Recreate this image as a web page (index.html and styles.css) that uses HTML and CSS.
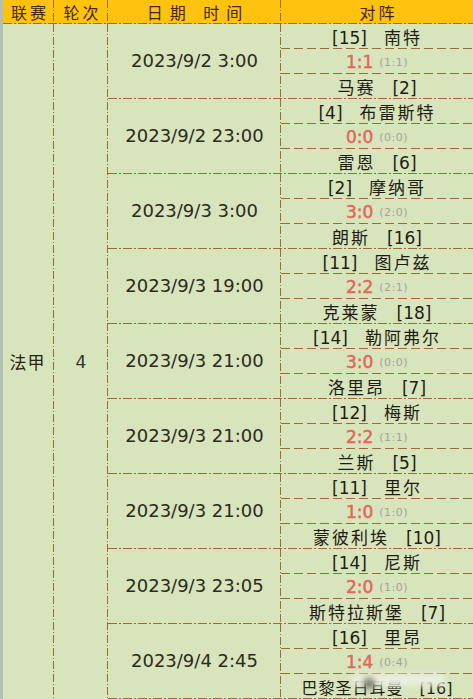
FILE: index.html
```html
<!DOCTYPE html>
<html lang="zh">
<head>
<meta charset="utf-8">
<link rel="stylesheet" href="styles.css">
</head>
<body>
<div class="sheet">
  <div class="head">
    <div class="h vl">联赛</div>
    <div class="h vl">轮次</div>
    <div class="h vl wide">日期 时间</div>
    <div class="h">对阵</div>
  </div>
  <div class="body">
    <div class="merged vl cjk">法甲</div>
    <div class="merged vl num">4</div>
    <div class="matches">
      <div class="match">
        <div class="time vl">2023/9/2 3:00</div>
        <div class="vs">
          <div class="row sub">[15]　<span class="n">南特</span></div>
          <div class="row sub score"><b>1:1</b><span>(1:1)</span></div>
          <div class="row"><span class="n">马赛</span>　[2]</div>
        </div>
      </div>
      <div class="match">
        <div class="time vl">2023/9/2 23:00</div>
        <div class="vs">
          <div class="row sub">[4]　<span class="n">布雷斯特</span></div>
          <div class="row sub score"><b>0:0</b><span>(0:0)</span></div>
          <div class="row"><span class="n">雷恩</span>　[6]</div>
        </div>
      </div>
      <div class="match">
        <div class="time vl">2023/9/3 3:00</div>
        <div class="vs">
          <div class="row sub">[2]　<span class="n">摩纳哥</span></div>
          <div class="row sub score"><b>3:0</b><span>(2:0)</span></div>
          <div class="row"><span class="n">朗斯</span>　[16]</div>
        </div>
      </div>
      <div class="match">
        <div class="time vl">2023/9/3 19:00</div>
        <div class="vs">
          <div class="row sub">[11]　<span class="n">图卢兹</span></div>
          <div class="row sub score"><b>2:2</b><span>(2:1)</span></div>
          <div class="row"><span class="n">克莱蒙</span>　[18]</div>
        </div>
      </div>
      <div class="match">
        <div class="time vl">2023/9/3 21:00</div>
        <div class="vs">
          <div class="row sub">[14]　<span class="n">勒阿弗尔</span></div>
          <div class="row sub score"><b>3:0</b><span>(0:0)</span></div>
          <div class="row"><span class="n">洛里昂</span>　[7]</div>
        </div>
      </div>
      <div class="match">
        <div class="time vl">2023/9/3 21:00</div>
        <div class="vs">
          <div class="row sub">[12]　<span class="n">梅斯</span></div>
          <div class="row sub score"><b>2:2</b><span>(1:1)</span></div>
          <div class="row"><span class="n">兰斯</span>　[5]</div>
        </div>
      </div>
      <div class="match">
        <div class="time vl">2023/9/3 21:00</div>
        <div class="vs">
          <div class="row sub">[11]　<span class="n">里尔</span></div>
          <div class="row sub score"><b>1:0</b><span>(1:0)</span></div>
          <div class="row"><span class="n">蒙彼利埃</span>　[10]</div>
        </div>
      </div>
      <div class="match">
        <div class="time vl">2023/9/3 23:05</div>
        <div class="vs">
          <div class="row sub">[14]　<span class="n">尼斯</span></div>
          <div class="row sub score"><b>2:0</b><span>(1:0)</span></div>
          <div class="row"><span class="n">斯特拉斯堡</span>　[7]</div>
        </div>
      </div>
      <div class="match">
        <div class="time vl">2023/9/4 2:45</div>
        <div class="vs">
          <div class="row sub">[16]　<span class="n">里昂</span></div>
          <div class="row sub score"><b>1:4</b><span>(0:4)</span></div>
          <div class="row last"><span class="n">巴黎圣日耳曼</span>　[16]<i class="smudge"></i></div>
        </div>
      </div>
    </div>
  </div>
</div>
</body>
</html>
```

FILE: styles.css
```css
html, body {
  margin: 0;
  padding: 0;
  background: #d8e4bc;
}

.sheet {
  width: 470px;
  height: 699px;
  overflow: hidden;
  border-left: 3px solid #b2c1b6;
  display: flex;
  flex-direction: column;
  font-family: "DejaVu Sans", "Noto Sans CJK SC", sans-serif;
  color: #262416;
}

.vl {
  background-image: linear-gradient(to bottom, #9c6c34 0 8px, transparent 8px 10px, #9c6c34 10px 11px, transparent 11px 13px);
  background-size: 1px 13px;
  background-position: right top;
  background-repeat: repeat-y;
}

.head {
  height: 24px;
  display: grid;
  grid-template-columns: 51px 54px 173px 1fr;
  background-color: #ffc20e;
  position: relative;
}

.head::after {
  content: "";
  position: absolute;
  left: 0;
  right: 0;
  bottom: 0;
  height: 1px;
  background-image: linear-gradient(to right, #9c6c34 0 9px, transparent 9px 11px, #9c6c34 11px 13px, transparent 13px 15px);
  background-size: 15px 1px;
}

.h {
  display: flex;
  align-items: center;
  justify-content: center;
  font-family: "Noto Sans CJK SC", sans-serif;
  font-size: 16px;
  letter-spacing: 3px;
  padding-left: 3px;
  color: #3b2a0c;
}

.h.wide {
  letter-spacing: 7px;
  padding-left: 7px;
}

.body {
  flex: 1;
  display: grid;
  grid-template-columns: 51px 54px 1fr;
}

.merged {
  display: flex;
  align-items: center;
  justify-content: center;
  font-size: 17px;
}

.merged.cjk {
  font-family: "Noto Sans CJK SC", sans-serif;
  letter-spacing: 1px;
  padding-right: 2px;
}

.merged.num {
  font-size: 17px;
  color: #333;
}

.matches {
  display: flex;
  flex-direction: column;
}

.match {
  height: 75px;
  flex: none;
  display: grid;
  grid-template-columns: 173px 1fr;
  background-image: linear-gradient(to right, #9c6c34 0 9px, transparent 9px 11px, #9c6c34 11px 13px, transparent 13px 15px);
  background-size: 15px 1px;
  background-position: left bottom;
  background-repeat: repeat-x;
}

.time {
  display: flex;
  align-items: center;
  justify-content: center;
  font-size: 18px;
  color: #2b2a1e;
  padding-bottom: 2px;
}

.vs {
  display: flex;
  flex-direction: column;
}

.row {
  height: 25px;
  display: flex;
  align-items: center;
  justify-content: center;
  font-size: 17px;
  white-space: pre;
  color: #1e1d14;
  position: relative;
}

.n {
  letter-spacing: 2px;
}

.row.last {
  font-size: 16px;
}

.row.last .n {
  letter-spacing: 1px;
}

.row.sub {
  background-image: linear-gradient(to right, #9c6c34 0 9px, transparent 9px 13px);
  background-size: 13px 1px;
  background-position: left bottom;
  background-repeat: repeat-x;
}

.score {
  gap: 6px;
}

.score b {
  font-size: 17px;
  font-weight: normal;
  -webkit-text-stroke: 0.5px #e2675c;
  color: #e2675c;
}

.score span {
  font-size: 11px;
  color: #a3a39a;
  letter-spacing: 0.5px;
  padding-top: 2px;
}

.smudge {
  position: absolute;
  left: 72px;
  top: 0;
  width: 92px;
  height: 12px;
  background: #eaefdf;
  filter: blur(3px);
}

.smudge::before {
  content: "";
  position: absolute;
  left: 12px;
  top: 5px;
  width: 8px;
  height: 9px;
  background: #4a4a44;
  filter: blur(1.5px);
}
```
